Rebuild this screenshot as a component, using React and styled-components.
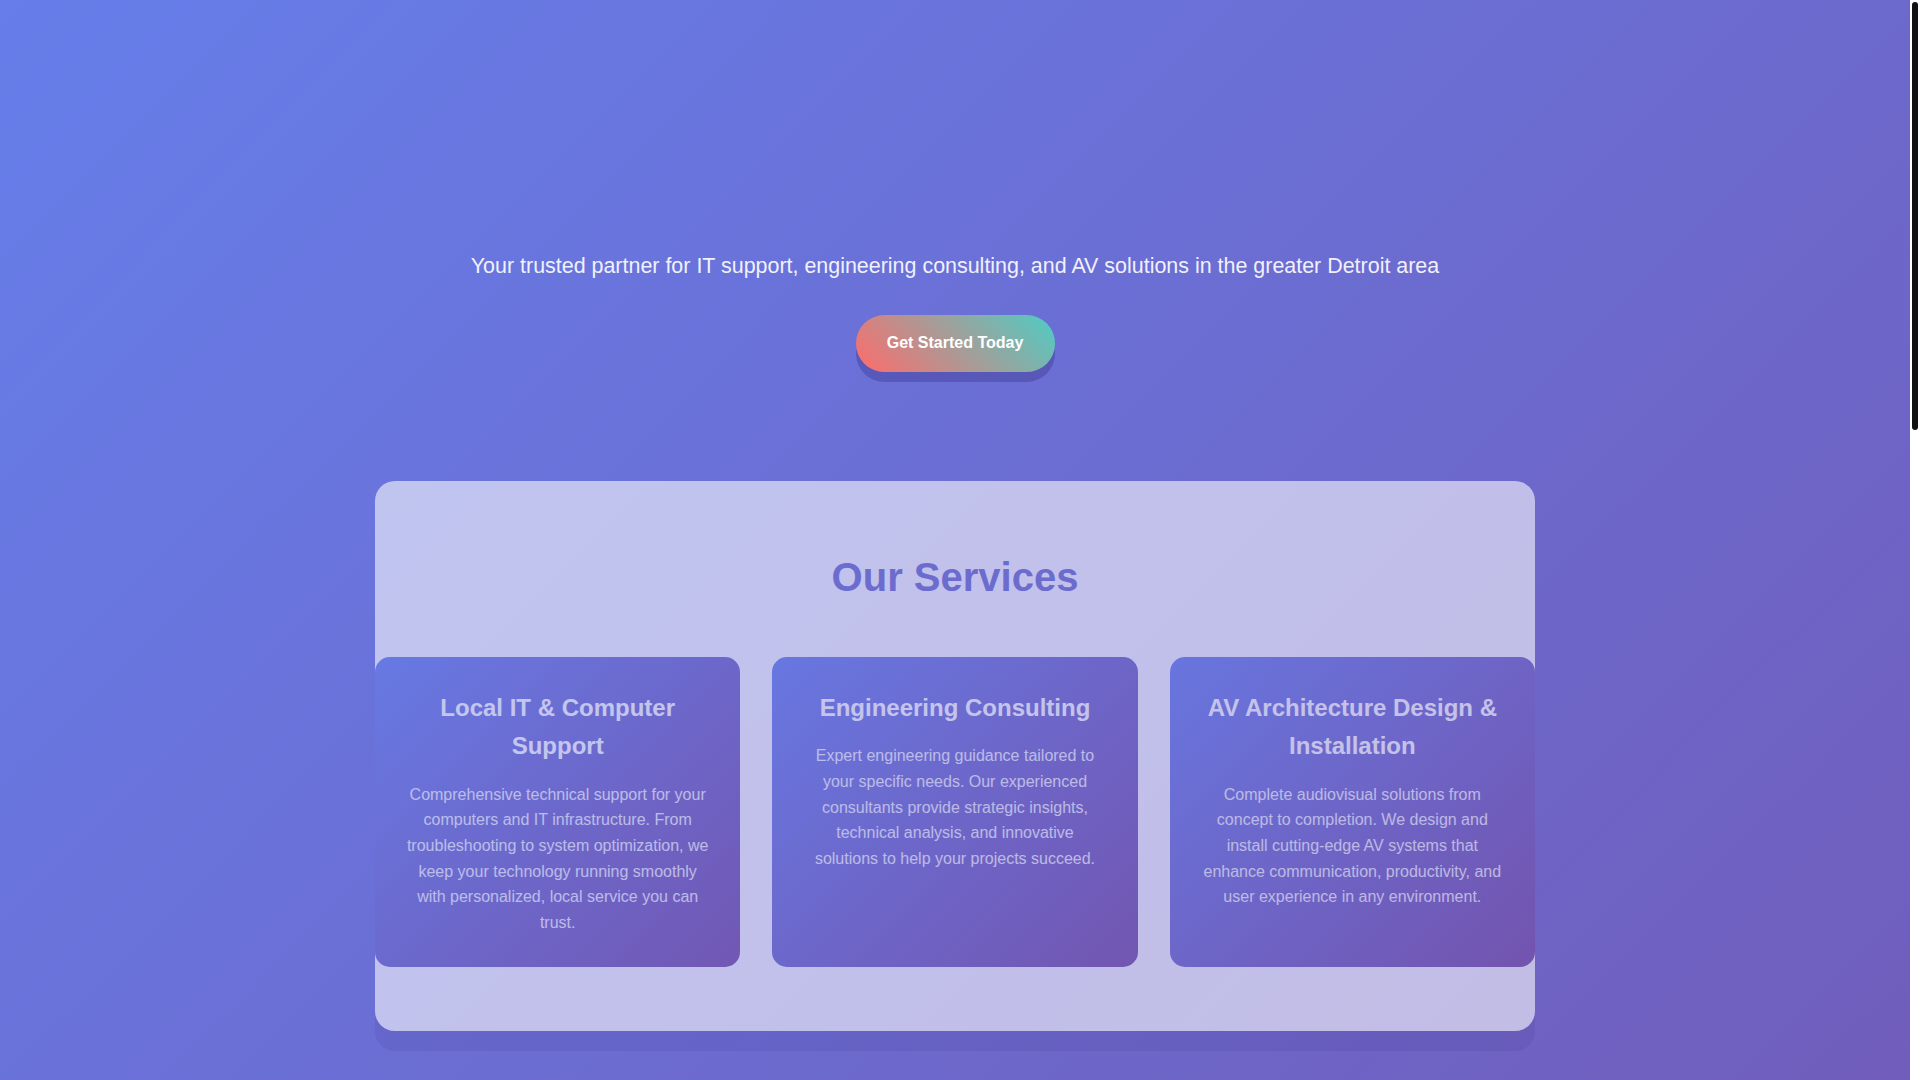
import React from 'react'
import styled, { createGlobalStyle } from 'styled-components'

const GlobalStyle = createGlobalStyle`
* {
  margin: 0;
  padding: 0;
  box-sizing: border-box;
}
body {
  font-family: "Liberation Sans", Arial, sans-serif;
  line-height: 1.6;
  color: #333;
  background: linear-gradient(135deg, #667eea 0%, #764ba2 100%);
}
`;

const Page = styled.div`
min-height: 2725px;
padding-right: 10px;
`;

/* the page's thin dark scrollbar, drawn over the right edge */
const ScrollTrack = styled.div`
position: fixed;
top: 0;
right: 0;
width: 10px;
height: 100vh;
background: #fff;
z-index: 10;
`;

const ScrollThumb = styled.div`
margin: 2px 2px 0;
width: 6px;
height: 428px;
background: #111;
border-radius: 3px;
`;

const Container = styled.div`
max-width: 1200px;
margin: 0 auto;
padding: 0 20px;
`;

const Hero = styled.section`
padding: 249px 0 109px;
text-align: center;
color: white;
`;

const Subtitle = styled.p`
font-size: 1.34rem;
opacity: 0.9;
margin-bottom: 2rem;
`;

const CtaButton = styled.button`
font-family: inherit;
display: inline-block;
border: none;
cursor: pointer;
color: white;
font-size: 1rem;
font-weight: bold;
line-height: 1.15;
padding: 1.2rem 1.95rem;
border-radius: 50px;
background: linear-gradient(45deg, #ff6b6b, #4ecdc4);
box-shadow: 0 10px 0 rgba(40, 30, 110, 0.28);
`;

const Services = styled.section`
background: rgba(255, 255, 255, 0.97);
border-radius: 20px;
padding: 4rem 0;
box-shadow: 0 20px 0 rgba(30, 20, 100, 0.12);
opacity: 0.6;
`;

const SectionTitle = styled.h2`
text-align: center;
font-size: 2.5rem;
color: #6c6ccc;
margin-bottom: 3rem;
`;

const Grid = styled.div`
display: grid;
grid-template-columns: repeat(3, 1fr);
gap: 2rem;
`;

const Card = styled.div`
background: linear-gradient(135deg, #667eea 0%, #764ba2 100%);
color: white;
border-radius: 15px;
padding: 2rem 31px;
text-align: center;
`;

const CardTitle = styled.h3`
font-size: 1.5rem;
margin-bottom: 1rem;
`;

const CardText = styled.p`
font-size: 1rem;
opacity: 0.9;
`;

const services = [
  {
    title: 'Local IT & Computer Support',
    text: 'Comprehensive technical support for your computers and IT infrastructure. From troubleshooting to system optimization, we keep your technology running smoothly with personalized, local service you can trust.',
  },
  {
    title: 'Engineering Consulting',
    text: 'Expert engineering guidance tailored to your specific needs. Our experienced consultants provide strategic insights, technical analysis, and innovative solutions to help your projects succeed.',
  },
  {
    title: 'AV Architecture Design & Installation',
    text: 'Complete audiovisual solutions from concept to completion. We design and install cutting-edge AV systems that enhance communication, productivity, and user experience in any environment.',
  },
];

const App = () => {
  return (
    <Page>
      <GlobalStyle />
      <ScrollTrack>
        <ScrollThumb />
      </ScrollTrack>
      <Container>
        <Hero>
          <Subtitle>Your trusted partner for IT support, engineering consulting, and AV solutions in the greater Detroit area</Subtitle>
          <CtaButton>Get Started Today</CtaButton>
        </Hero>
        <Services>
          <SectionTitle>Our Services</SectionTitle>
          <Grid>
            {services.map((s) => (
              <Card key={s.title}>
                <CardTitle>{s.title}</CardTitle>
                <CardText>{s.text}</CardText>
              </Card>
            ))}
          </Grid>
        </Services>
      </Container>
    </Page>
  )
}

export default App
